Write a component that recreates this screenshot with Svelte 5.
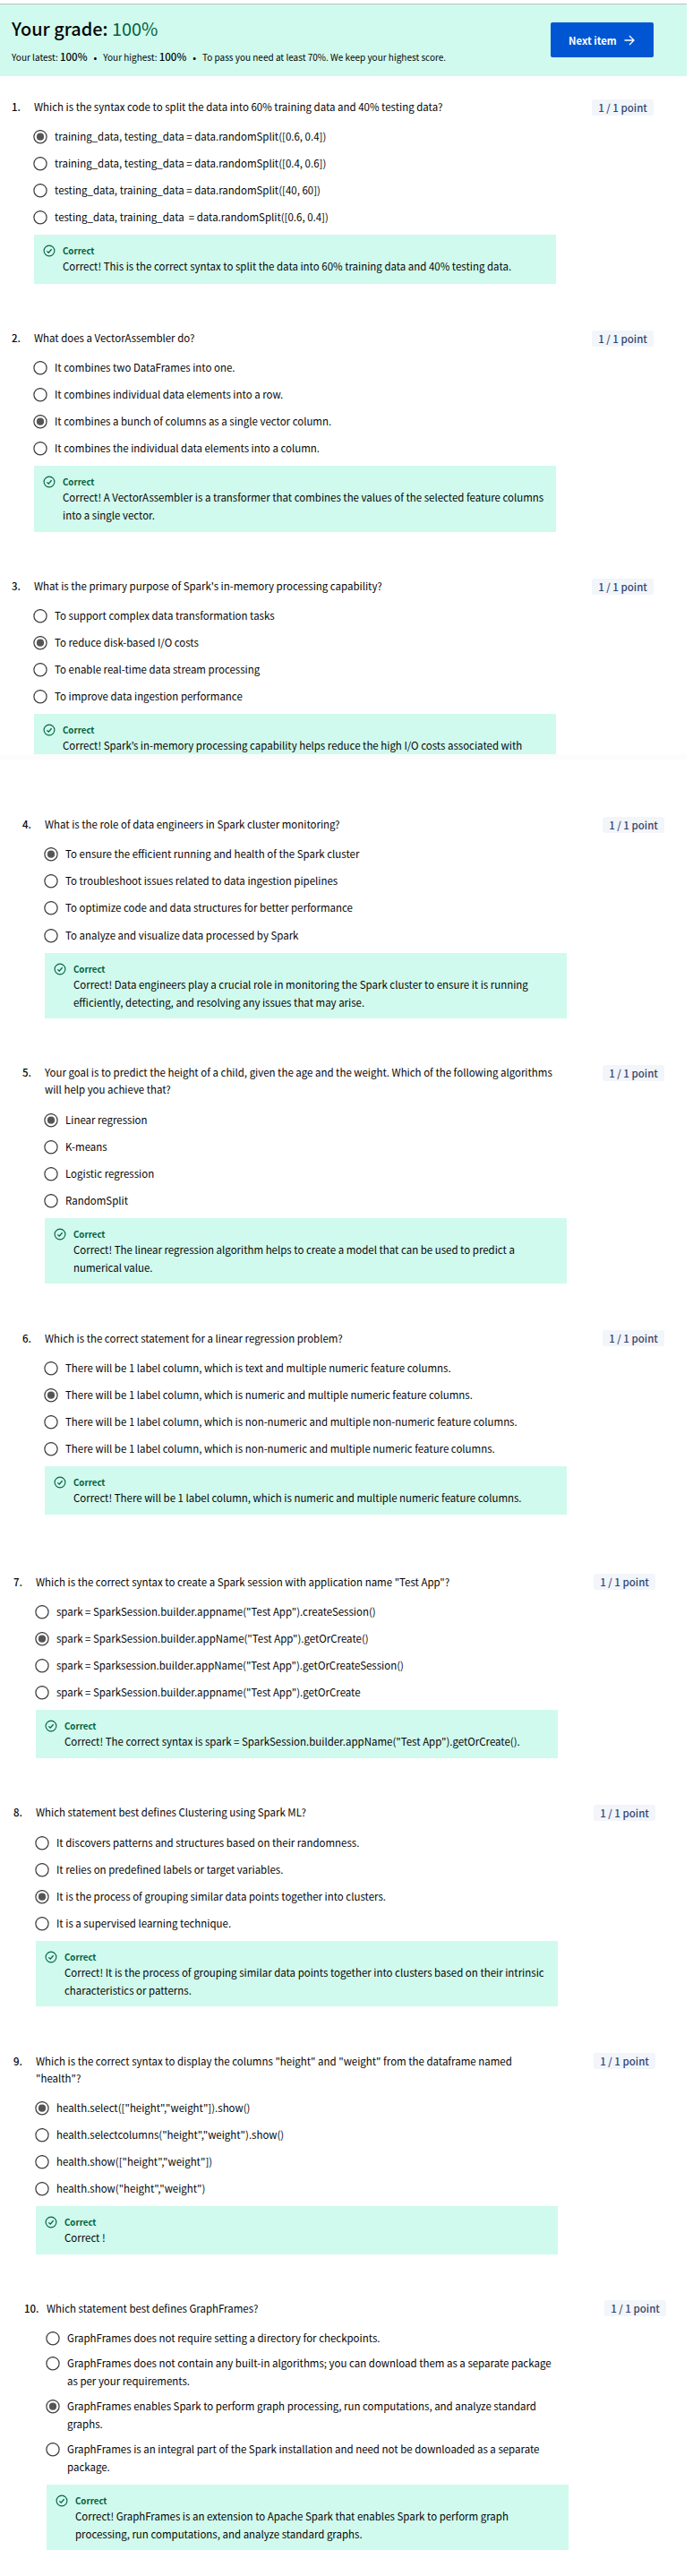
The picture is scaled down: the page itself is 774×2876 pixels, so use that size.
<script>
  const questions = [
    {
      n: 1, shift: 0, gap: 26, feedbackHeight: 55,
      title: 'Which is the syntax code to split the data into 60% training data and 40% testing data?',
      options: [
        'training_data, testing_data = data.randomSplit([0.6, 0.4])',
        'training_data, testing_data = data.randomSplit([0.4, 0.6])',
        'testing_data, training_data = data.randomSplit([40, 60])',
        'testing_data, training_data \u00a0= data.randomSplit([0.6, 0.4])'
      ],
      picked: 0,
      feedback: 'Correct! This is the correct syntax to split the data into 60% training data and 40% testing data.'
    },
    {
      n: 2, shift: 0, gap: 52, feedbackHeight: 74,
      title: 'What does a VectorAssembler do?',
      options: [
        'It combines two DataFrames into one.',
        'It combines individual data elements into a row.',
        'It combines a bunch of columns as a single vector column.',
        'It combines the individual data elements into a column.'
      ],
      picked: 2,
      feedback: 'Correct! A VectorAssembler is a transformer that combines the values of the selected feature columns\ninto a single vector.'
    },
    {
      n: 3, shift: 0, gap: 52, feedbackHeight: 45, divider: true,
      title: "What is the primary purpose of Spark's in-memory processing capability?",
      options: [
        'To support complex data transformation tasks',
        'To reduce disk-based I/O costs',
        'To enable real-time data stream processing',
        'To improve data ingestion performance'
      ],
      picked: 1,
      feedback: 'Correct! Spark’s in-memory processing capability helps reduce the high I/O costs associated with'
    },
    {
      n: 4, shift: 12, gap: 64, feedbackHeight: 73, spread: true,
      title: 'What is the role of data engineers in Spark cluster monitoring?',
      options: [
        'To ensure the efficient running and health of the Spark cluster',
        'To troubleshoot issues related to data ingestion pipelines',
        'To optimize code and data structures for better performance',
        'To analyze and visualize data processed by Spark'
      ],
      picked: 0,
      feedback: 'Correct! Data engineers play a crucial role in monitoring the Spark cluster to ensure it is running\nefficiently, detecting, and resolving any issues that may arise.'
    },
    {
      n: 5, shift: 12, gap: 52, feedbackHeight: 73, lead: 0.5,
      title: 'Your goal is to predict the height of a child, given the age and the weight. Which of the following algorithms\nwill help you achieve that?',
      options: ['Linear regression', 'K-means', 'Logistic regression', 'RandomSplit'],
      picked: 0,
      feedback: 'Correct! The linear regression algorithm helps to create a model that can be used to predict a\nnumerical value.'
    },
    {
      n: 6, shift: 12, gap: 52, feedbackHeight: 54, lead: 1, low: true,
      title: 'Which is the correct statement for a linear regression problem?',
      options: [
        'There will be 1 label column, which is text and multiple numeric feature columns.',
        'There will be 1 label column, which is numeric and multiple numeric feature columns.',
        'There will be 1 label column, which is non-numeric and multiple non-numeric feature columns.',
        'There will be 1 label column, which is non-numeric and multiple numeric feature columns.'
      ],
      picked: 1,
      feedback: 'Correct! There will be 1 label column, which is numeric and multiple numeric feature columns.'
    },
    {
      n: 7, shift: 2, gap: 66, feedbackHeight: 54, lead: 1, low: true,
      title: 'Which is the correct syntax to create a Spark session with application name "Test App"?',
      options: [
        'spark = SparkSession.builder.appname("Test App").createSession()',
        'spark = SparkSession.builder.appName("Test App").getOrCreate()',
        'spark = Sparksession.builder.appName("Test App").getOrCreateSession()',
        'spark = SparkSession.builder.appname("Test App").getOrCreate'
      ],
      picked: 1,
      feedback: 'Correct! The correct syntax is spark = SparkSession.builder.appName("Test App").getOrCreate().'
    },
    {
      n: 8, shift: 2, gap: 52, feedbackHeight: 73, lead: 1,
      title: 'Which statement best defines Clustering using Spark ML?',
      options: [
        'It discovers patterns and structures based on their randomness.',
        'It relies on predefined labels or target variables.',
        'It is the process of grouping similar data points together into clusters.',
        'It is a supervised learning technique.'
      ],
      picked: 2,
      feedback: 'Correct! It is the process of grouping similar data points together into clusters based on their intrinsic\ncharacteristics or patterns.'
    },
    {
      n: 9, shift: 2, gap: 52, feedbackHeight: 54, lead: 0.5, low: true,
      title: 'Which is the correct syntax to display the columns "height" and "weight" from the dataframe named\n"health"?',
      options: [
        'health.select(["height","weight"]).show()',
        'health.selectcolumns("height","weight").show()',
        'health.show(["height","weight"])',
        'health.show("height","weight")'
      ],
      picked: 0,
      feedback: 'Correct !'
    },
    {
      n: 10, shift: 14, gap: 51, feedbackHeight: 73, lead: 1, tight: true, low: true,
      title: 'Which statement best defines GraphFrames?',
      options: [
        'GraphFrames does not require setting a directory for checkpoints.',
        'GraphFrames does not contain any built-in algorithms; you can download them as a separate package\nas per your requirements.',
        'GraphFrames enables Spark to perform graph processing, run computations, and analyze standard\ngraphs.',
        'GraphFrames is an integral part of the Spark installation and need not be downloaded as a separate\npackage.'
      ],
      picked: 2,
      feedback: 'Correct! GraphFrames is an extension to Apache Spark that enables Spark to perform graph\nprocessing, run computations, and analyze standard graphs.'
    }
  ];
</script>

<main>
  <header>
    <div class="summary">
      <h1>Your grade: <span>100%</span></h1>
      <p class="scores">
        <span>Your latest: <b>100%</b></span><i>•</i><span>Your highest: <b>100%</b></span><i>•</i><span>To pass you need at least 70%. We keep your highest score.</span>
      </p>
    </div>
    <button type="button">
      Next item
      <svg width="12" height="12" viewBox="0 0 12 12" fill="none" stroke="currentColor" stroke-width="1.3">
        <path d="M0.5 6H11M6 1l5 5-5 5" />
      </svg>
    </button>
  </header>

  {#each questions as q (q.n)}
    <section style="margin-top:{q.gap}px; margin-left:{q.shift}px">
      <div class="ask" class:low={q.low}>
        <span class="number">{q.n}.</span>
        <h2>{q.title}</h2>
        <span class="badge">1 / 1 point</span>
      </div>
      <div class="body" style="padding-top:{q.lead ?? 0}px">
        <ul class:tight={q.tight} class:spread={q.spread}>
          {#each q.options as option, i}
            <li>
              <svg class="radio" width="16" height="16" viewBox="0 0 16 16">
                <circle cx="8" cy="7.7" r="7.1" fill="#fff" stroke="#3f3f3f" stroke-width="1.25" />
                {#if i === q.picked}<circle cx="8" cy="7.7" r="4.1" fill="#555" />{/if}
              </svg>
              <span class="label">{option}</span>
            </li>
          {/each}
        </ul>
        <div class="feedback" style="height:{q.feedbackHeight}px">
          <svg width="14" height="14" viewBox="0 0 14 14" fill="none" stroke="#006241">
            <circle cx="7" cy="7" r="5.9" stroke-width="1.1" />
            <path d="M4.4 7.4l1.8 1.7 3.4-3.8" stroke-width="1.3" />
          </svg>
          <div>
            <strong>Correct</strong>
            <p>{q.feedback}</p>
          </div>
        </div>
      </div>
    </section>
    {#if q.divider}<div class="divider"></div>{/if}
  {/each}
</main>

<style>
  :global(body) { margin: 0; background: #fff; }
  main {
    box-sizing: border-box;
    width: 774px;
    height: 2876px;
    padding-top: 4px;
    overflow: hidden;
    font: 11.47px/19.5px "Noto Sans CJK KR", "Noto Sans", sans-serif;
    color: #050505;
    white-space: nowrap;
  }
  header {
    box-sizing: border-box;
    display: flex;
    justify-content: space-between;
    align-items: flex-start;
    width: 767px;
    height: 81px;
    padding: 20px 37px 0 13px;
    border-top: 1px solid #b9bfbd;
    background: #d0faed;
  }
  h1, h2, p, ul { margin: 0; padding: 0; font-weight: 400; }
  .summary { margin-top: -11px; }
  h1 { font-size: 19.9px; line-height: 36px; font-weight: 500; color: #050505; }
  h1 span { color: #006241; font-weight: 400; }
  .scores { display: flex; align-items: baseline; margin-top: 3px; font-size: 10px; line-height: 20px; }
  .scores b { font-size: 11.5px; font-weight: 500; }
  .scores i { width: 17.7px; text-align: center; font-style: normal; font-weight: 700; }
  button {
    box-sizing: border-box;
    display: flex;
    align-items: center;
    gap: 8px;
    width: 115px;
    height: 39px;
    padding: 0 0 0 20px;
    border: 0;
    border-radius: 2px;
    background: #0056d2;
    color: #fff;
    font: 700 11.34px/20px "Noto Sans CJK KR", "Noto Sans", sans-serif;
  }
  section { width: 730px; }
  .ask { display: flex; align-items: flex-start; padding-left: 13px; }
  .number { width: 25px; margin-top: -1.5px; font-weight: 500; }
  h2 { flex: 1; margin-top: -1.5px; font-size: inherit; line-height: inherit; white-space: pre; }
  .low .number, .low h2 { margin-top: -0.5px; margin-bottom: -1px; }
  .badge {
    box-sizing: border-box;
    width: 69px;
    height: 18px;
    margin: 0 0 -18px;
    border-radius: 3px;
    background: #f2f5fa;
    color: #34456f;
    font-size: 11.5px;
    font-weight: 500;
    line-height: 19px;
    text-align: center;
  }
  .body { width: 583px; margin: 9px 0 0 38px; }
  ul { list-style: none; padding-bottom: 4px; }
  li { display: flex; align-items: flex-start; gap: 8px; padding: 5px 0; }
  .radio { flex: none; margin: 2px 0 2px -1px; }
  .label { margin: -1px 0 1px; line-height: 20px; white-space: pre; }
  .spread li:last-child { margin-top: 1px; }
  ul.tight { padding: 1px 0 5px; }
  .tight li { padding: 4px 0; }
  .feedback {
    box-sizing: border-box;
    display: flex;
    gap: 8px;
    padding: 8px 0 0 10px;
    overflow: hidden;
    background: #d0faed;
  }
  .feedback svg { flex: none; margin-top: 3px; }
  strong { display: block; font-size: 9.7px; line-height: 18px; color: #006241; margin-top: 1px; }
  .feedback p { margin-top: -1px; white-space: pre; }
  .divider { width: 767px; height: 6px; background: #fcfcfc; }
</style>
